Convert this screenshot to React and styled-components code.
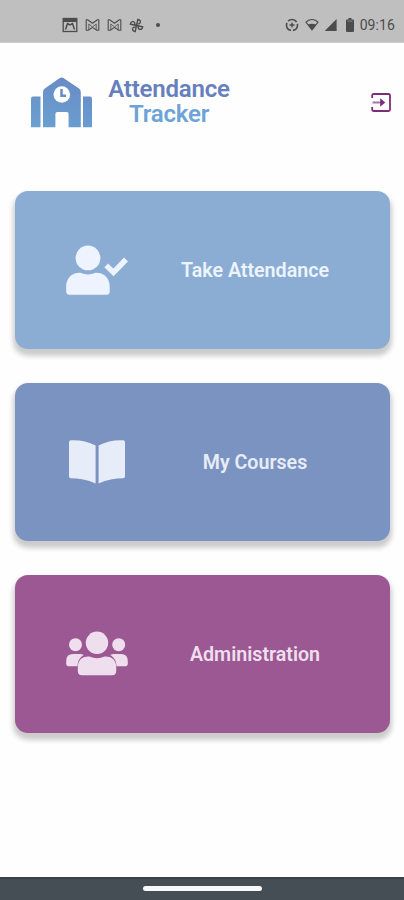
import React from "react";
import styled, { createGlobalStyle, ThemeProvider } from "styled-components";

const theme = {
  colors: {
    attendance: "#8badd3",
    courses: "#7b93c0",
    admin: "#9b5892",
    accent: "#7d2c78",
    status: "#bfbfbf",
    statusIcon: "#4c4c4c",
    navigation: "#454e55",
  },
};

const GlobalStyle = createGlobalStyle`
  * {
    box-sizing: border-box;
  }

  body {
    margin: 0;
    background: #fefefe;
    font-family: Roboto, "Liberation Sans", sans-serif;
  }
`;

const Screen = styled.div`
  display: flex;
  flex-direction: column;
  width: 404px;
  height: 900px;
  overflow: hidden;
`;

const StatusBar = styled.div`
  display: flex;
  flex: none;
  align-items: center;
  justify-content: space-between;
  height: 43px;
  padding: 8px 9px 0 62px;
  color: ${({ theme }) => theme.colors.statusIcon};
  background: ${({ theme }) => theme.colors.status};
  border-bottom: 1px solid #cdcdcd;

  svg {
    display: block;
  }
`;

const StatusGroup = styled.div`
  display: flex;
  align-items: center;
  gap: ${({ $gap }) => $gap};
`;

const NotificationDot = styled.span`
  width: 4px;
  height: 4px;
  margin-left: 5px;
  border-radius: 50%;
  background: currentColor;
`;

const Clock = styled.span`
  font-size: 14px;
  line-height: 16px;
  letter-spacing: 0.1px;
`;

const Header = styled.header`
  display: flex;
  flex: none;
  align-items: flex-start;
  height: 148px;
  padding: 34px 13px 0 30px;
`;

const Title = styled.h1`
  width: 122px;
  margin: 0 0 0 15px;
  font-size: 24px;
  font-weight: 600;
  line-height: 25px;
  letter-spacing: -0.2px;
  text-align: center;
  white-space: nowrap;
`;

const TitleLine = styled.span`
  display: block;
  color: ${({ $color }) => $color};
`;

const LogoutButton = styled.button`
  margin: 16px 0 0 auto;
  padding: 0;
  border: 0;
  background: none;
  color: ${({ theme }) => theme.colors.accent};

  svg {
    display: block;
  }
`;

const Menu = styled.main`
  display: flex;
  flex: 1;
  flex-direction: column;
  gap: 34px;
  padding: 0 14px 0 15px;
`;

const Card = styled.button`
  display: grid;
  grid-template-columns: 164px 152px;
  flex: none;
  align-items: center;
  justify-items: center;
  height: 158px;
  padding: 0;
  border: 0;
  border-radius: 13px;
  background: ${({ theme, $color }) => theme.colors[$color]};
  box-shadow: 0 5px 5px 2px rgba(0, 0, 0, 0.2);
  color: ${({ $text }) => $text};
  font-family: inherit;

  svg {
    display: block;
  }
`;

const CardLabel = styled.span`
  padding-top: 2px;
  font-size: 19.65px;
  font-weight: 600;
  line-height: 24px;
  white-space: nowrap;
`;

const NavigationBar = styled.div`
  display: flex;
  flex: none;
  justify-content: center;
  height: 23px;
  padding-top: 7px;
  background: ${({ theme }) => theme.colors.navigation};
  border-top: 2px solid #3b4246;
`;

const HomeHandle = styled.div`
  width: 119px;
  height: 5px;
  border-radius: 3px;
  background: #f6f8fa;
`;

const PhotoIcon = () => (
  <svg width="16" height="16" viewBox="0 0 16 16" fill="none">
    <rect x="1.2" y="1.5" width="13.6" height="13" stroke="currentColor" strokeWidth="1.3" />
    <path d="M1 1h14v4H1z" fill="currentColor" />
    <path d="M3.5 12.5 5.5 6.5 8 8l2.5-1.5 2 6" stroke="currentColor" strokeWidth="1.5" />
  </svg>
);

const MailIcon = () => (
  <svg width="15" height="14" viewBox="0 0 15 14" fill="none">
    <path
      d="M1.2 1.7v10.6h2L7.5 9.4l4.3 2.9h2V1.7h-1.4L7.5 5.3 2.6 1.7Z"
      stroke="currentColor"
      strokeWidth="1.1"
      strokeLinejoin="round"
    />
    <path d="M3.8 12V6l3.7 3 3.7-3v6" stroke="currentColor" strokeWidth="0.8" />
  </svg>
);

const PinwheelIcon = () => (
  <svg width="15" height="15" viewBox="0 0 15 15" fill="none">
    <g stroke="currentColor" strokeWidth="1.3" transform="rotate(12 7.5 7.5)">
      <path d="M7.5 7.5V1.2c4 0 4.4 4.5 0 4.5" />
      <path d="M7.5 7.5h6.3c0 4-4.5 4.4-4.5 0" />
      <path d="M7.5 7.5v6.3c-4 0-4.4-4.5 0-4.5" />
      <path d="M7.5 7.5H1.2c0-4 4.5-4.4 4.5 0" />
    </g>
  </svg>
);

const DataSaverIcon = () => (
  <svg width="14" height="14" viewBox="0 0 14 14" fill="none" stroke="currentColor">
    <circle cx="7" cy="7" r="5.5" strokeWidth="1.6" strokeDasharray="9.5 2.02" strokeDashoffset="2" />
    <path d="M7 4.5v5M4.5 7h5" strokeWidth="1.4" />
  </svg>
);

const WifiIcon = () => (
  <svg width="14" height="14" viewBox="0 0 14 14">
    <path
      d="M1 4.2C4 .5 10 .5 13 4.2L7 12Z"
      fill="none"
      stroke="currentColor"
      strokeWidth="1.1"
      strokeLinejoin="round"
    />
    <path d="M2.7 6.7c2.6-1.4 6-1.4 8.6 0L7 12Z" fill="currentColor" />
  </svg>
);

const SignalIcon = styled.span`
  width: 12px;
  height: 12px;
  margin-right: 3px;
  background: currentColor;
  clip-path: polygon(100% 0, 100% 100%, 0 100%);
`;

const BatteryIcon = () => (
  <svg width="8" height="14" viewBox="0 0 8 14">
    <path d="M2.5 0h3v1.4H7q1 0 1 1V13q0 1-1 1H1q-1 0-1-1V2.4q0-1 1-1h1.5Z" fill="currentColor" />
    <path d="M1.5 3.1h5" stroke="#888" />
  </svg>
);

const SchoolLogo = () => (
  <svg width="63" height="52" viewBox="0 0 63 52">
    <defs>
      <linearGradient id="school" gradientUnits="userSpaceOnUse" x1="38" y1="0" x2="26" y2="52">
        <stop offset="0" stopColor="#688cc6" />
        <stop offset="1" stopColor="#6a9fd0" />
      </linearGradient>
    </defs>
    <g fill="url(#school)">
      <path d="M3 19.5h7.5v30.8H1V21.5q0-2 2-2Z" />
      <path d="M53 19.5h7q2 0 2 2v28.8h-9Z" />
      <path d="M29.8 1.1q1.8-1 3.6 0L49 11.5q1.8 1.2 1.8 3.5v35.3H38.6V37q0-2-2-2h-9.2q-2 0-2 2v13.3H13V15q0-2.2 1.8-3.5Z" />
    </g>
    <circle cx="31.8" cy="17.5" r="8.3" fill="#fff" />
    <path d="M31.5 12v6.7h4.5" fill="none" stroke="#688dc6" strokeWidth="2.5" />
  </svg>
);

const LogoutIcon = () => (
  <svg width="20" height="19" viewBox="0 0 20 19" fill="none" stroke="currentColor">
    <path d="M1.2 5V2.5Q1.2 1 2.7 1h14.8Q19 1 19 2.5v14q0 1.5-1.5 1.5H2.7q-1.5 0-1.5-1.5V14" strokeWidth="1.8" />
    <path d="M1.5 9.5H11" strokeWidth="2" opacity="0.65" />
    <path d="M9.2 5.2 14.3 9.5 9.2 13.8Z" fill="currentColor" stroke="none" />
  </svg>
);

const UserCheckIcon = () => (
  <svg width="64" height="52" viewBox="0 0 64 52" fill="currentColor">
    <circle cx="23" cy="13.9" r="12.4" />
    <path d="M15.5 28.7Q23 32.1 30.5 28.7C39.5 28.4 44.7 34.4 44.7 42.4v5q0 3.3-3.3 3.3H4.5Q1.2 50.7 1.2 47.4v-5C1.2 34.4 6.5 28.4 15.5 28.7Z" />
    <path d="M41.2 21.4 48.5 28.4 61 15.5" fill="none" stroke="currentColor" strokeWidth="5.4" />
  </svg>
);

const BookIcon = () => (
  <svg width="58" height="46" viewBox="0 0 58 46" fill="currentColor">
    <path d="M3 1.2c9-.4 17 1.4 24.6 5.2v38.2C19.5 40.7 11 39.4 2.8 39.3Q1 39.2 1 37.3V3.1Q1 1.3 3 1.2Z" />
    <path d="M55 1.2c-9-.4-16.8 1.4-24.4 5.2v38.2c8-3.9 16.5-5.2 24.6-5.3q1.8-.1 1.8-2V3.1q0-1.8-2-1.9Z" />
  </svg>
);

const UsersIcon = () => (
  <svg width="64" height="48" viewBox="0 0 64 48" fill="currentColor">
    <circle cx="10.5" cy="14.7" r="6.5" />
    <circle cx="53.7" cy="14.7" r="6.5" />
    <path d="M8 24h7q2.2 0 3.8 1c-4.5 2.7-6 6.4-6.3 11.2H4q-2.8 0-2.8-2.8V31q0-7 6.8-7Z" />
    <path d="M56 24h-7q-2.2 0-3.8 1c4.5 2.7 6 6.4 6.3 11.2H60q2.8 0 2.8-2.8V31q0-7-6.8-7Z" />
    <circle cx="32" cy="12.8" r="11.2" />
    <path d="M24.5 26.5Q32 29.8 39.5 26.5C47.5 26 51.2 31 51.2 37v4q0 4.2-4.2 4.2H17q-4.2 0-4.2-4.2v-4c0-6 3.7-11 11.7-10.5Z" />
  </svg>
);

const options = [
  { label: "Take Attendance", color: "attendance", text: "#edf4ff", Icon: UserCheckIcon },
  { label: "My Courses", color: "courses", text: "#e7edf8", Icon: BookIcon },
  { label: "Administration", color: "admin", text: "#efdfee", Icon: UsersIcon },
];

export default function App() {
  return (
    <ThemeProvider theme={theme}>
      <GlobalStyle />
      <Screen>
        <StatusBar>
          <StatusGroup $gap="7px">
            <PhotoIcon />
            <MailIcon />
            <MailIcon />
            <PinwheelIcon />
            <NotificationDot />
          </StatusGroup>
          <StatusGroup $gap="6px">
            <DataSaverIcon />
            <WifiIcon />
            <SignalIcon />
            <BatteryIcon />
            <Clock>09:16</Clock>
          </StatusGroup>
        </StatusBar>
        <Header>
          <SchoolLogo />
          <Title>
            <TitleLine $color="#6680bd">Attendance</TitleLine>
            <TitleLine $color="#6da4d5">Tracker</TitleLine>
          </Title>
          <LogoutButton aria-label="Log out">
            <LogoutIcon />
          </LogoutButton>
        </Header>
        <Menu>
          {options.map(({ label, color, text, Icon }) => (
            <Card key={label} $color={color} $text={text}>
              <Icon />
              <CardLabel>{label}</CardLabel>
            </Card>
          ))}
        </Menu>
        <NavigationBar>
          <HomeHandle />
        </NavigationBar>
      </Screen>
    </ThemeProvider>
  );
}
